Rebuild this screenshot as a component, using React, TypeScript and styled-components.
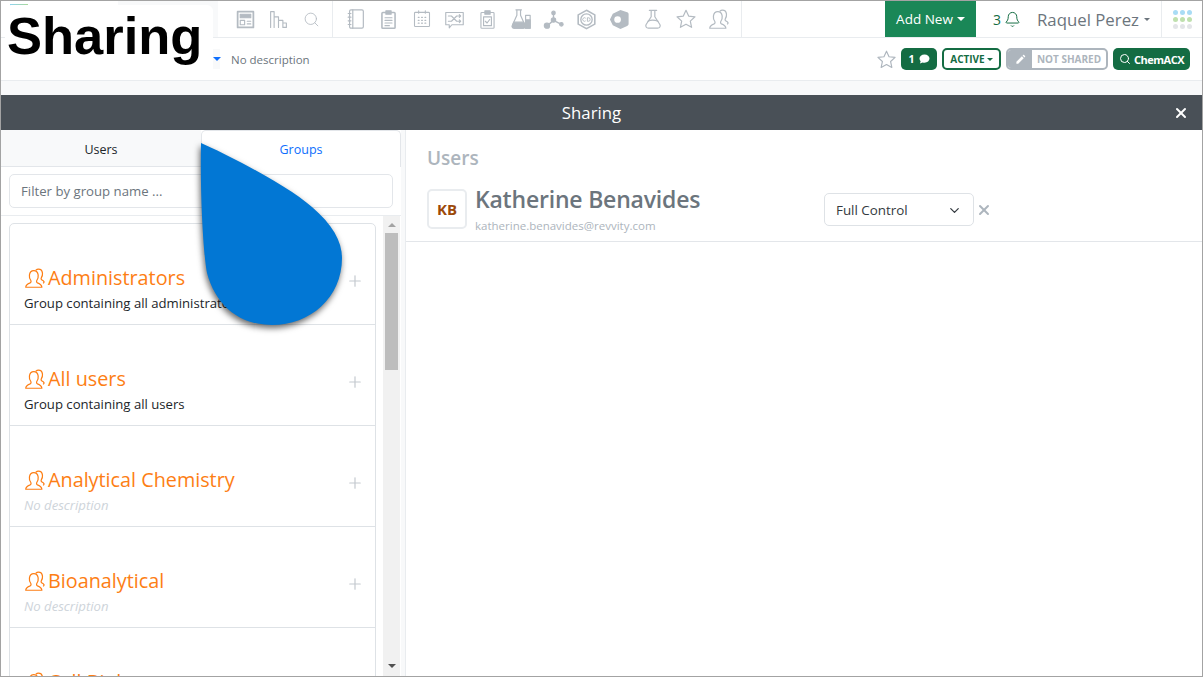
import React from 'react';
import styled, { createGlobalStyle } from 'styled-components';
import { ChevronDown, Search, X, Plus, Bell } from 'lucide-react';

const font = `"Open Sans", "Noto Sans", "Liberation Sans", sans-serif`;

const GlobalStyle = createGlobalStyle`
	html, body {
		margin: 0;
		padding: 0;
		height: 100%;
		overflow: hidden;
		background: #fff;
		font-family: ${font};
	}
	* {
		box-sizing: border-box;
	}
`;

const Frame = styled.div`
	position: relative;
	width: 1203px;
	height: 677px;
	border: 1px solid #a3a3a3;
	overflow: hidden;
	display: flex;
	flex-direction: column;
	background: #fff;
`;

const TopBar = styled.header`
	display: flex;
	height: 37px;
	border-bottom: 1px solid #e9ecef;
	flex: none;
`;

const LogoSlot = styled.div`
	width: 117px;
	padding: 3px 0 0 9px;
`;

const LogoSliver = styled.div`
	width: 18px;
	height: 2px;
	background: linear-gradient(90deg, #8fd3f0, #a9d89a);
`;

const ShadeSlot = styled.div`
	width: 100px;
	background: #f8f9fa;
`;

const ToolGroup = styled.nav<{ $first?: boolean }>`
	display: flex;
	align-items: center;
	height: 36px;
	padding-left: ${(p) => (p.$first ? 11 : 6)}px;
	padding-right: ${(p) => (p.$first ? 4 : 6)}px;
	border-right: 1px solid #e9ecef;
`;

const ToolButton = styled.span`
	width: 33px;
	height: 36px;
	display: flex;
	align-items: center;
	justify-content: center;
	color: #b4bbc2;
`;

const Spacer = styled.div`
	flex: 1;
`;

const AddNew = styled.button`
	width: 91px;
	height: 36px;
	border: 0;
	background: #1a8757;
	color: #fff;
	font: 400 13.5px ${font};
	display: flex;
	align-items: center;
	justify-content: center;
	gap: 4px;
	padding: 0;
`;

const Caret = styled.span<{ $color?: string; $size?: number }>`
	display: inline-block;
	border-top: ${(p) => p.$size ?? 4}px solid ${(p) => p.$color ?? 'currentColor'};
	border-left: ${(p) => p.$size ?? 4}px solid transparent;
	border-right: ${(p) => p.$size ?? 4}px solid transparent;
`;

const Notifications = styled.div`
	display: flex;
	align-items: center;
	gap: 3px;
	margin-left: 17px;
	color: #146c43;
	font-size: 14px;
`;

const UserMenu = styled.div`
	display: flex;
	align-items: center;
	gap: 5px;
	margin-left: 16px;
	width: 124px;
	color: #6c757d;
	font-size: 16.8px;
	font-weight: 500;
	white-space: nowrap;
`;

const AppsSlot = styled.div`
	width: 41px;
	border-left: 1px solid #e9ecef;
	display: flex;
	align-items: center;
	justify-content: center;
`;

const DotGrid = styled.div`
	display: grid;
	grid-template-columns: repeat(3, 5px);
	gap: 2px;
`;

const Dot = styled.span<{ $color: string }>`
	width: 5px;
	height: 5px;
	border-radius: 50%;
	background: ${(p) => p.$color};
`;

const SubBar = styled.div`
	display: flex;
	align-items: center;
	height: 43px;
	border-bottom: 1px solid #e9ecef;
	flex: none;
`;

const CaretBox = styled.div`
	margin-left: 212px;
	width: 7px;
	height: 20px;
	display: flex;
	align-items: center;
	justify-content: center;
	background: #f8f9fa;
`;

const Description = styled.span`
	margin-left: 11px;
	color: #6c757d;
	font-size: 11.5px;
`;

const BadgeRow = styled.div`
	display: flex;
	align-items: center;
	gap: 5px;
	margin-right: 12px;
`;

const StarButton = styled.span`
	display: flex;
	color: #adb5bd;
	margin-right: -1px;
`;

const Badge = styled.span<{ $width: number }>`
	width: ${(p) => p.$width}px;
	height: 22px;
	border-radius: 5px;
	background: #146c43;
	color: #fff;
	font-size: 10.5px;
	font-weight: 700;
	display: flex;
	align-items: center;
	justify-content: center;
	gap: 4px;
`;

const StatusBadge = styled(Badge)`
	background: #fff;
	color: #146c43;
	border: 2px solid #146c43;
	gap: 2px;
	font-size: 10px;
`;

const SharedBadge = styled.span`
	width: 102px;
	height: 22px;
	border-radius: 5px;
	border: 2px solid #adb5bd;
	display: flex;
	overflow: hidden;
`;

const SharedIcon = styled.span`
	width: 24px;
	background: #adb5bd;
	color: #fff;
	display: flex;
	align-items: center;
	justify-content: center;
`;

const SharedText = styled.span`
	flex: 1;
	color: #adb5bd;
	font-size: 10px;
	font-weight: 700;
	display: flex;
	align-items: center;
	justify-content: center;
`;

const ChemBadge = styled(Badge)`
	font-size: 11px;
	letter-spacing: -0.5px;
	gap: 3px;
`;

const PageStrip = styled.div`
	height: 14px;
	background: #f8f9fa;
	flex: none;
`;

const ModalHeader = styled.div`
	position: relative;
	height: 35px;
	flex: none;
	background: #495057;
	color: #fff;
	font-size: 16.8px;
	display: flex;
	align-items: center;
	justify-content: center;
	padding-right: 20px;
`;

const CloseButton = styled.span`
	position: absolute;
	right: 13px;
	top: 10px;
	display: flex;
`;

const ModalBody = styled.div`
	flex: 1;
	min-height: 0;
	display: flex;
`;

const LeftPanel = styled.aside`
	width: 400px;
	display: flex;
	flex-direction: column;
	flex: none;
`;

const Tabs = styled.div`
	display: flex;
	height: 37px;
	flex: none;
`;

const Tab = styled.div<{ $active?: boolean }>`
	width: 200px;
	display: flex;
	align-items: center;
	justify-content: center;
	font-size: 12.5px;
	padding-top: ${(p) => (p.$active ? 0 : 2)}px;
	color: ${(p) => (p.$active ? '#0d6efd' : '#212529')};
	background: ${(p) => (p.$active ? '#fff' : '#f8f9fa')};
	border-top: ${(p) => (p.$active ? '1px solid #e3e6ea' : '0')};
	border-left: ${(p) => (p.$active ? '1px solid #e3e6ea' : '0')};
	border-right: ${(p) => (p.$active ? '1px solid #e3e6ea' : '0')};
	border-bottom: ${(p) => (p.$active ? '0' : '1px solid #e3e6ea')};
	border-radius: ${(p) => (p.$active ? '5px 5px 0 0' : '0')};
`;

const FilterArea = styled.div`
	height: 49px;
	flex: none;
	padding: 7px 8px;
	border-bottom: 1px solid #e9ecef;
`;

const FilterInput = styled.input`
	width: 384px;
	height: 34px;
	border: 1px solid #e3e6ea;
	border-radius: 5px;
	padding: 0 11px;
	font: 400 13.2px ${font};
	outline: none;
	&::placeholder {
		color: #6c757d;
		opacity: 1;
	}
`;

const ListArea = styled.div`
	flex: 1;
	min-height: 0;
	display: flex;
	overflow: hidden;
	padding-left: 8px;
`;

const GroupCard = styled.div`
	margin-top: 7px;
	width: 367px;
	height: 600px;
	flex: none;
	border: 1px solid #dee2e6;
	border-radius: 5px;
`;

const GroupRow = styled.div`
	height: 101px;
	padding: 0 14px 12px;
	display: flex;
	align-items: flex-end;
	justify-content: space-between;
	border-bottom: 1px solid #dee2e6;
`;

const GroupInfo = styled.div`
	display: flex;
	flex-direction: column;
	gap: 3px;
`;

const GroupName = styled.div`
	display: flex;
	align-items: center;
	gap: 3px;
	color: #fd7e14;
	font-size: 19.8px;
	line-height: 26px;
`;

const GroupDescription = styled.div<{ $empty?: boolean }>`
	font-size: 13.15px;
	line-height: 18px;
	white-space: nowrap;
	color: ${(p) => (p.$empty ? '#ced4da' : '#212529')};
	font-style: ${(p) => (p.$empty ? 'italic' : 'normal')};
`;

const AddButton = styled.span`
	display: flex;
	color: #c4c9cf;
	margin: 0 -3px 22px 0;
`;

const ScrollTrack = styled.div`
	margin-left: 7px;
	width: 17px;
	flex: none;
	background: #f1f1f1;
	display: flex;
	flex-direction: column;
	align-items: center;
`;

const ScrollUp = styled.span`
	margin-top: 7px;
	border-bottom: 4px solid #a3a3a3;
	border-left: 4px solid transparent;
	border-right: 4px solid transparent;
`;

const ScrollThumb = styled.div`
	margin-top: 6px;
	width: 13px;
	height: 137px;
	background: #bdbdbd;
`;

const ScrollDown = styled.span`
	margin-top: auto;
	margin-bottom: 8px;
	border-top: 4px solid #505050;
	border-left: 4px solid transparent;
	border-right: 4px solid transparent;
`;

const Gutter = styled.div`
	width: 5px;
	flex: none;
	background: #f8f9fa;
	border-right: 1px solid #e9ecef;
`;

const RightPanel = styled.section`
	flex: 1;
	min-width: 0;
`;

const SelectedBlock = styled.div`
	height: 112px;
	padding: 16px 21px 0;
	border-bottom: 1px solid #e3e6ea;
`;

const SectionTitle = styled.h4`
	margin: 0;
	font-size: 19px;
	line-height: 24px;
	font-weight: 600;
	color: #adb5bd;
`;

const UserRow = styled.div`
	display: flex;
	margin-top: 19px;
`;

const Avatar = styled.div`
	width: 40px;
	height: 40px;
	border: 2px solid #e9ecef;
	border-radius: 5px;
	color: #9c4a0a;
	font-size: 15px;
	font-weight: 700;
	display: flex;
	align-items: center;
	justify-content: center;
	flex: none;
`;

const UserInfo = styled.div`
	width: 349px;
	margin: -6px 0 0 8px;
`;

const UserName = styled.div`
	color: #6c757d;
	font-size: 23px;
	font-weight: 600;
	line-height: 32px;
	letter-spacing: -0.2px;
`;

const UserEmail = styled.div`
	color: #adb5bd;
	font-size: 11.5px;
	line-height: 16px;
	margin-top: 3px;
`;

const RoleSelect = styled.div`
	width: 150px;
	height: 33px;
	margin-top: 4px;
	border: 1px solid #dee2e6;
	border-radius: 5px;
	padding: 1px 11px 0;
	display: flex;
	align-items: center;
	justify-content: space-between;
	font-size: 13.4px;
	color: #343a40;
`;

const RemoveButton = styled.span`
	display: flex;
	color: #adb5bd;
	margin: 13px 0 0 2px;
	height: 16px;
`;

const SharingLabel = styled.div`
	position: absolute;
	left: 4px;
	top: 4px;
	width: 208px;
	height: 62px;
	background: #fff;
	border-radius: 6px;
	padding: 1px 0 0 2px;
	color: #000;
	font: 700 52.5px/60px "Liberation Sans", Arial, sans-serif;
`;

const Callout = styled.svg`
	position: absolute;
	left: 0;
	top: 0;
	width: 1201px;
	height: 675px;
	pointer-events: none;
	overflow: visible;
	filter: drop-shadow(-1px 3px 3px rgba(0, 0, 0, 0.6));
`;

const Svg = ({ children, size = 20, fill = 'none' }: { children: React.ReactNode; size?: number; fill?: string }) => (
	<svg
		width={size}
		height={size}
		viewBox="0 0 24 24"
		fill={fill}
		stroke="currentColor"
		strokeWidth={1.3}
		strokeLinejoin="round"
		strokeLinecap="round"
	>
		{children}
	</svg>
);

const GroupIcon = ({ size = 21 }: { size?: number }) => (
	<svg width={size} height={size} viewBox="0 0 24 24" fill="none" stroke="currentColor" strokeWidth={1.4} strokeLinejoin="round">
		<path d="M2 22c0-3 2.500-4 5-5 1.300-.6 1.300-2.200.5-3.300C6.300 12 6 10 6.200 8c.4-3 2.300-5 5-5s4.600 2 5 5c.2 2-.1 4-1.300 5.700-.8 1.100-.8 2.700.5 3.300 2.500 1 5 2 5 5z" />
		<path d="M13.500 2.600C14.500 1.700 15.500 1.300 16.500 1.300c2.500 0 4.300 1.800 4.600 4.500.2 2-.2 3.700-1.200 5.200-.6 1-.5 2.200.7 2.800 1 .5 2 1 2.400 2.200l-1 1.500" />
	</svg>
);

const tools: React.ReactNode[][] = [
	[
		<Svg key="layout" size={21}>
			<rect x="3" y="3" width="18" height="18" strokeWidth="2" />
			<rect x="6" y="6" width="12" height="4" fill="currentColor" />
			<rect x="6" y="13" width="5" height="5" />
			<path d="M14 14h4M14 17h4" />
		</Svg>,
		<Svg key="bars" size={21}>
			<path d="M3 21V3h4v18M7 21V9h5v12M12 21v-8h5v8M17 21v-5h4v5z" />
		</Svg>,
		<Search key="search" size={17} strokeWidth={1.2} />,
	],
	[
		<Svg key="notebook" size={22}>
			<rect x="5" y="2" width="15" height="20" rx="1.500" />
			<path d="M8.500 2v20M3.500 6h3M3.500 10h3M3.500 14h3M3.500 18h3" />
		</Svg>,
		<Svg key="clipboard" size={21}>
			<rect x="4.500" y="4" width="15" height="18" rx="1" strokeWidth="1.800" />
			<rect x="9" y="2" width="6" height="4" fill="currentColor" />
			<path d="M8 10h8M8 13h8M8 16h8M8 19h5" />
		</Svg>,
		<Svg key="calendar" size={20}>
			<rect x="3" y="4" width="18" height="17" rx="1" />
			<path d="M8 2v3M16 2v3" />
			<path d="M7.500 10h1M11.500 10h1M15.500 10h1M7.500 13.500h1M11.500 13.500h1M15.500 13.500h1M7.500 17h1M11.500 17h1M15.500 17h1" strokeWidth="1.500" />
		</Svg>,
		<Svg key="shuffle" size={21}>
			<path d="M2 4h20v14H9l-3 3.500V18H2z" />
			<path d="M5 8h3.500l6 6H19M5 14h3.500l6-6H19M17.500 6.500 19 8l-1.500 1.500M17.500 12.500 19 14l-1.500 1.500" />
		</Svg>,
		<Svg key="task" size={21}>
			<rect x="4.500" y="4" width="15" height="18" rx="1" />
			<rect x="9" y="2" width="6" height="4" fill="currentColor" />
			<rect x="7.500" y="9" width="9" height="10" />
			<path d="m9.500 14 2 2 3-4" />
		</Svg>,
		<svg key="lab" width="22" height="22" viewBox="0 0 24 24" fill="none" stroke="currentColor" strokeWidth="1.300" strokeLinejoin="round">
			<path d="M6 2h7M7.500 2v6L2.500 19c-.6 1.600.2 3 2 3h10c1.800 0 2.600-1.400 2-3l-5-11V2" />
			<path d="M4 15.500h11l1.500 4.500c0 1-.8 2-2 2h-10c-1.200 0-2-1-2-2z" fill="currentColor" />
			<path d="M17 8h5v14h-5z" />
			<path d="M17 13h5v9h-5z" fill="currentColor" />
		</svg>,
		<Svg key="network" size={21} fill="currentColor">
			<circle cx="12" cy="4.500" r="2" />
			<circle cx="12" cy="12.500" r="2.500" />
			<circle cx="4.500" cy="19" r="3" />
			<circle cx="21" cy="17.500" r="2" />
			<path d="M12 5v8M12 13l-7 6M12 13l9 4.500" fill="none" strokeWidth="1.600" />
		</Svg>,
		<svg key="cd" width="21" height="21" viewBox="0 0 24 24" fill="none" stroke="currentColor">
			<path d="m12 1.500 9.500 5.200v10.600L12 22.500l-9.500-5.200V6.700z" strokeWidth="1.800" />
			<circle cx="12" cy="12" r="6.500" strokeWidth="1.500" />
			<path d="M11 10.500a2 2 0 1 0 0 3M13 10h1.200a2 2 0 0 1 0 4H13z" strokeWidth="1.100" />
		</svg>,
		<svg key="shield" width="23" height="23" viewBox="0 0 24 24" fill="currentColor">
			<path
				fillRule="evenodd"
				d="M13 2 20 4.500c1 .4 1.500 1 1.500 2v10c0 1-.5 1.700-1.500 2.200L13 22 5 18 2 12l3-6zM10 8.500a3.500 3.500 0 1 0 0 7 3.500 3.500 0 0 0 0-7z"
			/>
		</svg>,
		<Svg key="flask" size={22}>
			<path d="M8 2.500h8M10 3v6.500L4.500 18c-1 2 .2 4 2.500 4h10c2.300 0 3.500-2 2.500-4L14 9.500V3" />
			<path d="M6.500 14.500c3-1.500 7-1.500 11 0" />
		</Svg>,
		<Svg key="star" size={22}>
			<path d="m12 2.500 2.900 6.300 6.900.8-5.100 4.700 1.400 6.800-6.100-3.400-6.100 3.400 1.400-6.800-5.100-4.700 6.900-.8z" />
		</Svg>,
		<GroupIcon key="group" size={21} />,
	],
];

const groups = [
	{ name: 'Administrators', description: 'Group containing all administrators' },
	{ name: 'All users', description: 'Group containing all users' },
	{ name: 'Analytical Chemistry' },
	{ name: 'Bioanalytical' },
	{ name: 'Cell Biology' },
	{ name: 'Chemistry' },
];

const dots = ['#a9dcf5', '#a9dcf5', '#a9dcf5', '#bfe0ae', '#bfe0ae', '#bfe0ae', '#e3e5e8', '#e3e5e8', '#e3e5e8'];

const App = () => {
	return (
		<>
			<GlobalStyle />
			<Frame>
				<TopBar>
					<LogoSlot>
						<LogoSliver />
					</LogoSlot>
					<ShadeSlot />
					{tools.map((group, i) => (
						<ToolGroup key={i} $first={i === 0}>
							{group.map((icon, j) => (
								<ToolButton key={j}>{icon}</ToolButton>
							))}
						</ToolGroup>
					))}
					<Spacer />
					<AddNew>
						Add New <Caret />
					</AddNew>
					<Notifications>
						3 <Bell size={17} strokeWidth={1.4} />
					</Notifications>
					<UserMenu>
						Raquel Perez <Caret $size={3.5} />
					</UserMenu>
					<AppsSlot>
						<DotGrid>
							{dots.map((color, i) => (
								<Dot key={i} $color={color} />
							))}
						</DotGrid>
					</AppsSlot>
				</TopBar>
				<SubBar>
					<CaretBox>
						<Caret $color="#0d6efd" />
					</CaretBox>
					<Description>No description</Description>
					<Spacer />
					<BadgeRow>
						<StarButton>
							<Svg size={21}>
								<path d="m12 2.500 2.900 6.300 6.900.8-5.100 4.700 1.400 6.800-6.100-3.400-6.100 3.400 1.400-6.800-5.100-4.700 6.900-.8z" />
							</Svg>
						</StarButton>
						<Badge $width={36}>
							1
							<svg width="11" height="10" viewBox="0 0 24 22" fill="#fff">
								<path d="M12 1C5.500 1 1 4.800 1 10c0 2.300 1 4.300 2.500 5.800L2 21l6-2.500c1.200.4 2.600.5 4 .5 6.500 0 11-4 11-9S18.500 1 12 1z" />
							</svg>
						</Badge>
						<StatusBadge $width={59}>
							ACTIVE <Caret $size={3.5} />
						</StatusBadge>
						<SharedBadge>
							<SharedIcon>
								<svg width="11" height="11" viewBox="0 0 24 24" fill="currentColor">
									<path d="M3 17v4h4L19 9l-4-4zM16.500 3.500l4 4 1.500-1.500c.5-.5.500-1.200 0-1.700l-2.300-2.300c-.5-.5-1.200-.5-1.700 0z" />
								</svg>
							</SharedIcon>
							<SharedText>NOT SHARED</SharedText>
						</SharedBadge>
						<ChemBadge $width={77}>
							<Search size={12} strokeWidth={2} />
							ChemACX
						</ChemBadge>
					</BadgeRow>
				</SubBar>
				<PageStrip />
				<ModalHeader>
					Sharing
					<CloseButton>
						<X size={16} strokeWidth={3} />
					</CloseButton>
				</ModalHeader>
				<ModalBody>
					<LeftPanel>
						<Tabs>
							<Tab>Users</Tab>
							<Tab $active>Groups</Tab>
						</Tabs>
						<FilterArea>
							<FilterInput placeholder="Filter by group name ..." readOnly />
						</FilterArea>
						<ListArea>
							<GroupCard>
								{groups.map((group) => (
									<GroupRow key={group.name}>
										<GroupInfo>
											<GroupName>
												<GroupIcon />
												{group.name}
											</GroupName>
											<GroupDescription $empty={!group.description}>
												{group.description ?? 'No description'}
											</GroupDescription>
										</GroupInfo>
										<AddButton>
											<Plus size={18} strokeWidth={1.6} />
										</AddButton>
									</GroupRow>
								))}
							</GroupCard>
							<ScrollTrack>
								<ScrollUp />
								<ScrollThumb />
								<ScrollDown />
							</ScrollTrack>
						</ListArea>
					</LeftPanel>
					<Gutter />
					<RightPanel>
						<SelectedBlock>
							<SectionTitle>Users</SectionTitle>
							<UserRow>
								<Avatar>KB</Avatar>
								<UserInfo>
									<UserName>Katherine Benavides</UserName>
									<UserEmail>katherine.benavides@revvity.com</UserEmail>
								</UserInfo>
								<RoleSelect>
									Full Control
									<ChevronDown size={15} color="#343a40" />
								</RoleSelect>
								<RemoveButton>
									<X size={16} strokeWidth={3} />
								</RemoveButton>
							</UserRow>
						</SelectedBlock>
					</RightPanel>
				</ModalBody>
				<Callout viewBox="0 0 1201 675">
					<path
						fill="#0277d4"
						d="M200 142C240 160 289 187 311 206C331 223 341 240 341 257C341 297 309 324 271 324C236 324 214 302 206 272C202 250 199 190 200 142Z"
					/>
				</Callout>
				<SharingLabel>Sharing</SharingLabel>
			</Frame>
		</>
	);
};

export default App;
